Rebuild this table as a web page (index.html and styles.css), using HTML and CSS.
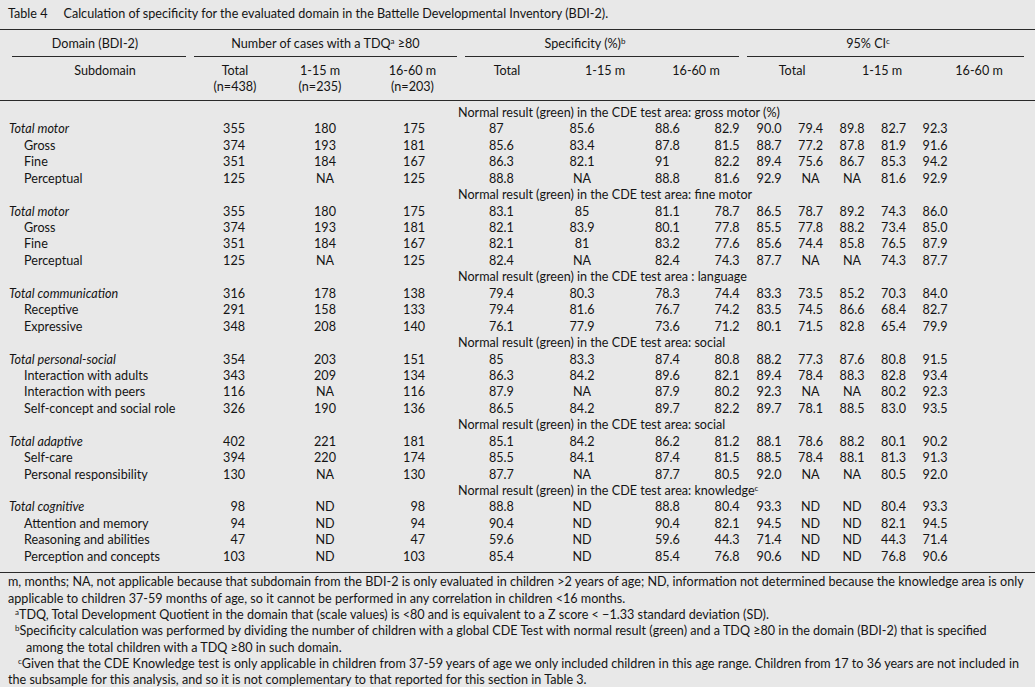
FILE: index.html
```html
<!DOCTYPE html>
<html lang="en">
<head>
<meta charset="utf-8">
<title>Table 4</title>
<link rel="stylesheet" href="styles.css">
</head>
<body>
<div class="page">
  <p class="caption"><span class="tno">Table 4</span>Calculation of specificity for the evaluated domain in the Battelle Developmental Inventory (BDI-2).</p>
  <table class="tbl">
    <colgroup>
      <col class="w190"><col class="w75"><col class="w110"><col class="w75"><col class="w110"><col class="w90"><col class="w56">
      <col class="w42"><col class="w42"><col class="w41"><col class="w42"><col class="w41"><col class="w42"><col class="w79">
    </colgroup>
    <thead>
      <tr class="h1">
        <th><div class="grp g-dom">Domain (BDI-2)</div></th>
        <th colspan="3"><div class="grp g-num">Number of cases with a TDQ<sup class="fn">a</sup> ≥80</div></th>
        <th colspan="4"><div class="grp g-spec">Specificity (%)<sup class="fn">b</sup></div></th>
        <th colspan="6"><div class="grp g-ci">95% CI<sup class="fn">c</sup></div></th>
      </tr>
      <tr class="h2">
        <th class="hs">Subdomain</th>
        <th class="ht">Total<br>(n=438)</th>
        <th>1-15 m<br>(n=235)</th>
        <th>16-60 m<br>(n=203)</th>
        <th class="hst">Total</th>
        <th>1-15 m</th>
        <th colspan="2" class="hs3">16-60 m</th>
        <th colspan="2" class="hc1">Total</th>
        <th colspan="2" class="hc2">1-15 m</th>
        <th colspan="2" class="hc3">16-60 m</th>
      </tr>
    </thead>
    <tbody>
      <tr class="sec first"><td colspan="4"></td><td colspan="10" class="secl">Normal result (green) in the CDE test area: gross motor (%)</td></tr>
      <tr class="r"><td class="tot">Total motor</td><td>355</td><td>180</td><td>175</td><td>87</td><td>85.6</td><td>88.6</td><td>82.9</td><td>90.0</td><td>79.4</td><td>89.8</td><td>82.7</td><td>92.3</td><td></td></tr>
      <tr class="r"><td class="sd">Gross</td><td>374</td><td>193</td><td>181</td><td>85.6</td><td>83.4</td><td>87.8</td><td>81.5</td><td>88.7</td><td>77.2</td><td>87.8</td><td>81.9</td><td>91.6</td><td></td></tr>
      <tr class="r"><td class="sd">Fine</td><td>351</td><td>184</td><td>167</td><td>86.3</td><td>82.1</td><td>91</td><td>82.2</td><td>89.4</td><td>75.6</td><td>86.7</td><td>85.3</td><td>94.2</td><td></td></tr>
      <tr class="r"><td class="sd">Perceptual</td><td>125</td><td>NA</td><td>125</td><td>88.8</td><td>NA</td><td>88.8</td><td>81.6</td><td>92.9</td><td>NA</td><td>NA</td><td>81.6</td><td>92.9</td><td></td></tr>

      <tr class="sec"><td colspan="4"></td><td colspan="10" class="secl">Normal result (green) in the CDE test area: fine motor</td></tr>
      <tr class="r"><td class="tot">Total motor</td><td>355</td><td>180</td><td>175</td><td>83.1</td><td>85</td><td>81.1</td><td>78.7</td><td>86.5</td><td>78.7</td><td>89.2</td><td>74.3</td><td>86.0</td><td></td></tr>
      <tr class="r"><td class="sd">Gross</td><td>374</td><td>193</td><td>181</td><td>82.1</td><td>83.9</td><td>80.1</td><td>77.8</td><td>85.5</td><td>77.8</td><td>88.2</td><td>73.4</td><td>85.0</td><td></td></tr>
      <tr class="r"><td class="sd">Fine</td><td>351</td><td>184</td><td>167</td><td>82.1</td><td>81</td><td>83.2</td><td>77.6</td><td>85.6</td><td>74.4</td><td>85.8</td><td>76.5</td><td>87.9</td><td></td></tr>
      <tr class="r"><td class="sd">Perceptual</td><td>125</td><td>NA</td><td>125</td><td>82.4</td><td>NA</td><td>82.4</td><td>74.3</td><td>87.7</td><td>NA</td><td>NA</td><td>74.3</td><td>87.7</td><td></td></tr>

      <tr class="sec"><td colspan="4"></td><td colspan="10" class="secl">Normal result (green) in the CDE test area : language</td></tr>
      <tr class="r"><td class="tot">Total communication</td><td>316</td><td>178</td><td>138</td><td>79.4</td><td>80.3</td><td>78.3</td><td>74.4</td><td>83.3</td><td>73.5</td><td>85.2</td><td>70.3</td><td>84.0</td><td></td></tr>
      <tr class="r"><td class="sd">Receptive</td><td>291</td><td>158</td><td>133</td><td>79.4</td><td>81.6</td><td>76.7</td><td>74.2</td><td>83.5</td><td>74.5</td><td>86.6</td><td>68.4</td><td>82.7</td><td></td></tr>
      <tr class="r"><td class="sd">Expressive</td><td>348</td><td>208</td><td>140</td><td>76.1</td><td>77.9</td><td>73.6</td><td>71.2</td><td>80.1</td><td>71.5</td><td>82.8</td><td>65.4</td><td>79.9</td><td></td></tr>

      <tr class="sec"><td colspan="4"></td><td colspan="10" class="secl">Normal result (green) in the CDE test area: social</td></tr>
      <tr class="r"><td class="tot">Total personal-social</td><td>354</td><td>203</td><td>151</td><td>85</td><td>83.3</td><td>87.4</td><td>80.8</td><td>88.2</td><td>77.3</td><td>87.6</td><td>80.8</td><td>91.5</td><td></td></tr>
      <tr class="r"><td class="sd">Interaction with adults</td><td>343</td><td>209</td><td>134</td><td>86.3</td><td>84.2</td><td>89.6</td><td>82.1</td><td>89.4</td><td>78.4</td><td>88.3</td><td>82.8</td><td>93.4</td><td></td></tr>
      <tr class="r"><td class="sd">Interaction with peers</td><td>116</td><td>NA</td><td>116</td><td>87.9</td><td>NA</td><td>87.9</td><td>80.2</td><td>92.3</td><td>NA</td><td>NA</td><td>80.2</td><td>92.3</td><td></td></tr>
      <tr class="r"><td class="sd">Self-concept and social role</td><td>326</td><td>190</td><td>136</td><td>86.5</td><td>84.2</td><td>89.7</td><td>82.2</td><td>89.7</td><td>78.1</td><td>88.5</td><td>83.0</td><td>93.5</td><td></td></tr>

      <tr class="sec"><td colspan="4"></td><td colspan="10" class="secl">Normal result (green) in the CDE test area: social</td></tr>
      <tr class="r"><td class="tot">Total adaptive</td><td>402</td><td>221</td><td>181</td><td>85.1</td><td>84.2</td><td>86.2</td><td>81.2</td><td>88.1</td><td>78.6</td><td>88.2</td><td>80.1</td><td>90.2</td><td></td></tr>
      <tr class="r"><td class="sd">Self-care</td><td>394</td><td>220</td><td>174</td><td>85.5</td><td>84.1</td><td>87.4</td><td>81.5</td><td>88.5</td><td>78.4</td><td>88.1</td><td>81.3</td><td>91.3</td><td></td></tr>
      <tr class="r"><td class="sd">Personal responsibility</td><td>130</td><td>NA</td><td>130</td><td>87.7</td><td>NA</td><td>87.7</td><td>80.5</td><td>92.0</td><td>NA</td><td>NA</td><td>80.5</td><td>92.0</td><td></td></tr>

      <tr class="sec"><td colspan="4"></td><td colspan="10" class="secl">Normal result (green) in the CDE test area: knowledge<sup class="fn">c</sup></td></tr>
      <tr class="r"><td class="tot">Total cognitive</td><td>98</td><td>ND</td><td>98</td><td>88.8</td><td>ND</td><td>88.8</td><td>80.4</td><td>93.3</td><td>ND</td><td>ND</td><td>80.4</td><td>93.3</td><td></td></tr>
      <tr class="r"><td class="sd">Attention and memory</td><td>94</td><td>ND</td><td>94</td><td>90.4</td><td>ND</td><td>90.4</td><td>82.1</td><td>94.5</td><td>ND</td><td>ND</td><td>82.1</td><td>94.5</td><td></td></tr>
      <tr class="r"><td class="sd">Reasoning and abilities</td><td>47</td><td>ND</td><td>47</td><td>59.6</td><td>ND</td><td>59.6</td><td>44.3</td><td>71.4</td><td>ND</td><td>ND</td><td>44.3</td><td>71.4</td><td></td></tr>
      <tr class="r last"><td class="sd">Perception and concepts</td><td>103</td><td>ND</td><td>103</td><td>85.4</td><td>ND</td><td>85.4</td><td>76.8</td><td>90.6</td><td>ND</td><td>ND</td><td>76.8</td><td>90.6</td><td></td></tr>
    </tbody>
  </table>
  <div class="notes">
    <p class="n0">m, months; NA, not applicable because that subdomain from the BDI-2 is only evaluated in children &gt;2 years of age; ND, information not determined because the knowledge area is only<br>applicable to children 37-59 months of age, so it cannot be performed in any correlation in children &lt;16 months.</p>
    <p class="na"><sup class="fn">a</sup>TDQ, Total Development Quotient in the domain that (scale values) is &lt;80 and is equivalent to a Z score &lt; −1.33 standard deviation (SD).</p>
    <p class="nb"><sup class="fn">b</sup>Specificity calculation was performed by dividing the number of children with a global CDE Test with normal result (green) and a TDQ ≥80 in the domain (BDI-2) that is specified<br>among the total children with a TDQ ≥80 in such domain.</p>
    <p class="nc"><sup class="fn">c</sup>Given that the CDE Knowledge test is only applicable in children from 37-59 years of age we only included children in this age range. Children from 17 to 36 years are not included in<br>the subsample for this analysis, and so it is not complementary to that reported for this section in Table 3.</p>
  </div>
</div>
</body>
</html>
```

FILE: styles.css
```css
html, body {
  margin: 0;
  padding: 0;
  background: #e8e8e8;
}
body {
  font-family: Lato, "Open Sans", "Liberation Sans", sans-serif;
  font-size: 12.6px;
  color: #141414;
}
.page {
  width: 1035px;
  height: 687px;
  overflow: hidden;
}
.caption {
  margin: 0;
  box-sizing: border-box;
  height: 29px;
  padding: 5.5px 8px 0;
  line-height: 16.44px;
  white-space: nowrap;
}
.tno {
  margin-right: 16px;
}
.fn {
  font-size: 8px;
  line-height: 0;
  vertical-align: 4px;
}

.tbl {
  width: 1035px;
  table-layout: fixed;
  border-collapse: separate;
  border-spacing: 0;
  border-top: 1px solid #2a2a2a;
  border-bottom: 1px solid #2a2a2a;
}
.w190 { width: 190px; }
.w110 { width: 110px; }
.w90 { width: 90px; }
.w79 { width: 79px; }
.w75 { width: 75px; }
.w56 { width: 56px; }
.w42 { width: 42px; }
.w41 { width: 41px; }

.tbl th, .tbl td {
  padding: 0;
  font-weight: normal;
  line-height: 16.44px;
  white-space: nowrap;
  vertical-align: top;
}

/* header row 1 */
.tbl .h1 th {
  padding-top: 6px;
}
.grp {
  text-align: center;
  padding-bottom: 3.56px;
  border-bottom: 1px solid #2a2a2a;
}
.g-dom { margin: 0 4px 0 12px; padding-right: 8px; }
.g-num { margin: 0 -7px 0 4px; }
.g-spec { margin: 0 9px 0 15px; padding-right: 34px; }
.g-ci { margin: 0 11px 0 -1px; padding-right: 35px; }

/* header row 2 */
.tbl .h2 th {
  text-align: center;
  padding-top: 6px;
  padding-bottom: 4.12px;
  border-bottom: 1px solid #2a2a2a;
}
.tbl .h2 .hs { padding-left: 20px; }
.tbl .h2 .ht { padding-left: 15px; }
.tbl .h2 .hst { padding-left: 4px; }
.tbl .h2 .hs3 { padding-right: 6px; }
.tbl .h2 .hc1 { padding-left: 5px; }
.tbl .h2 .hc2 { padding-left: 19px; }
.tbl .h2 .hc3 { padding-left: 9px; }

/* body */
.tbl .sec.first td { padding-top: 4px; }
.tbl .r.last td { padding-bottom: 6.5px; }
.tbl td.secl { padding-left: 8px; }
.tbl td.tot { padding-left: 9px; font-style: italic; }
.tbl td.sd { padding-left: 24px; }

.tbl .r td:nth-child(2) { text-align: right; padding-right: 20px; }
.tbl .r td:nth-child(3) { text-align: center; padding-left: 10px; }
.tbl .r td:nth-child(4) { text-align: right; padding-right: 25px; }
.tbl .r td:nth-child(5) { text-align: left; padding-left: 39px; }
.tbl .r td:nth-child(6) { text-align: center; padding-right: 46px; }
.tbl .r td:nth-child(7) { text-align: left; padding-left: 5px; }
.tbl .r td:nth-child(n+8) { text-align: center; }

/* notes */
.notes {
  padding: 1.5px 8px 0;
  line-height: 16.33px;
}
.notes p {
  margin: 0;
  white-space: nowrap;
}
.notes .na { padding-left: 7px; }
.notes .nb { padding-left: 18px; text-indent: -11px; }
.notes .nc { text-indent: 10px; }
```
